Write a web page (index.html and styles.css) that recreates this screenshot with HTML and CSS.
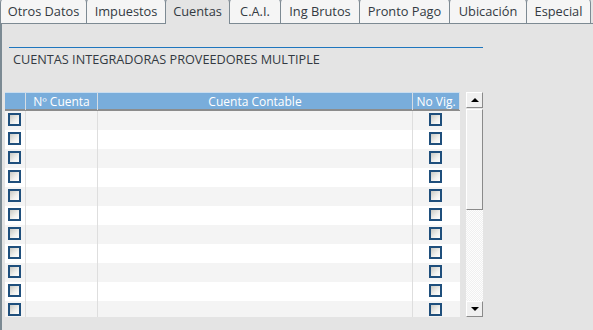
FILE: index.html
```html
<!DOCTYPE html>
<html>
<head>
<meta charset="utf-8">
<link rel="stylesheet" href="styles.css">
</head>
<body>
<div class="tabs">
  <div class="tab w87">Otros Datos</div>
  <div class="tab w80">Impuestos</div>
  <div class="tab w65 active">Cuentas</div>
  <div class="tab w52">C.A.I.</div>
  <div class="tab w80">Ing Brutos</div>
  <div class="tab w91">Pronto Pago</div>
  <div class="tab w78">Ubicación</div>
  <div class="tab w65">Especial</div>
</div>
<div class="panel">
  <div class="section-title">CUENTAS INTEGRADORAS PROVEEDORES MULTIPLE</div>
  <div class="grid-area">
    <div class="grid">
      <div class="row head">
        <div class="cell c-sel"></div>
        <div class="cell c-num">Nº Cuenta</div>
        <div class="cell c-acc">Cuenta Contable</div>
        <div class="cell c-nv">No Vig.</div>
      </div>
      <div class="body" id="body"></div>
    </div>
    <div class="scrollbar">
      <div class="sb-btn"><span class="arr up"></span></div>
      <div class="sb-thumb"></div>
      <div class="sb-track"></div>
      <div class="sb-btn"><span class="arr down"></span></div>
    </div>
  </div>
</div>
<script>
  var body = document.getElementById('body');
  for (var i = 0; i < 11; i++) {
    var r = document.createElement('div');
    r.className = 'row ' + (i % 2 === 0 ? 'odd' : 'even');
    r.innerHTML = '<div class="cell c-sel"><span class="chk"></span></div>' +
      '<div class="cell c-num"></div><div class="cell c-acc"></div>' +
      '<div class="cell c-nv"><span class="chk"></span></div>';
    body.appendChild(r);
  }
</script>
</body>
</html>
```
FILE: styles.css
```css
html, body {
  margin: 0;
  padding: 0;
  background: #e4e4e4;
  width: 593px;
  height: 330px;
  overflow: hidden;
  font-family: "Open Sans", "Liberation Sans", sans-serif;
  color: #333a42;
}
.tabs {
  display: flex;
  height: 23px;
  border-bottom: 1px solid #7d8a93;
  align-items: flex-end;
}
.tab {
  box-sizing: border-box;
  margin-top: -4px;
  margin-left: -1px;
  padding: 6px 0 0 0;
  text-align: center;
  border: 1px solid #7d8a93;
  border-bottom: none;
  border-radius: 7px 7px 0 0;
  background: #f5f5f5;
  font-size: 12.8px;
  line-height: 17px;
  white-space: nowrap;
  margin-bottom: -1px;
  height: 28px;
}
.w87 { width: 87px; }
.w80 { width: 80px; }
.w65 { width: 65px; }
.w52 { width: 52px; }
.w91 { width: 91px; }
.w78 { width: 78px; }
.tab:first-child { margin-left: 0; }
.tab.active {
  background: #e4e4e4;
  position: relative;
  z-index: 1;
}
.tab:not(.active) {
  height: 27px;
  margin-bottom: 0;
}
.panel {
  border-left: 2px solid #7b8a93;
  height: 306px;
  box-sizing: border-box;
  padding-top: 23px;
}
.section-title {
  margin-left: 7px;
  width: 474px;
  border-top: 1px solid #1e76be;
  padding: 3px 0 0 4px;
  font-size: 12.7px;
  line-height: 16px;
  height: 45px;
  box-sizing: border-box;
}
.grid-area {
  display: flex;
  margin-left: 3px;
  gap: 6px;
}
.grid {
  width: 455px;
  height: 225px;
  overflow: hidden;
}
.row {
  display: grid;
  grid-template-columns: 20px 72px 315px 48px;
  height: 19px;
}
.row.head {
  height: 16px;
  background: #79addb;
  border-top: 1px solid #c9ddef;
  border-bottom: 2px solid #8c8c8c;
  color: #fff;
  font-size: 12px;
  line-height: 17px;
}
.head .cell {
  text-align: center;
  border-left: 1px solid #d6dde4;
}
.head .cell:first-child { border-left: none; }
.head .c-nv { border-right: 1px solid #d6dde4; }
.row.odd { background: #f4f4f4; }
.row.even { background: #ffffff; }
.body .cell { border-left: 1px solid #dedede; position: relative; }
.body .cell:first-child { border-left: none; }
.chk {
  display: block;
  width: 13px;
  height: 13px;
  box-sizing: border-box;
  border: 2px solid #1f4f7c;
  background: linear-gradient(135deg, #c9c9c3 0%, #f1f1ee 60%, #ffffff 100%);
  margin-top: 2px;
}
.c-sel .chk { margin-left: 3px; }
.c-nv .chk { margin-left: 16px; }
.scrollbar {
  width: 17px;
  height: 225px;
  display: flex;
  flex-direction: column;
}
.sb-btn {
  height: 16px;
  box-sizing: border-box;
  background: #f0f0f0;
  border-top: 1px solid #ffffff;
  border-left: 1px solid #ffffff;
  border-right: 1px solid #8a8a8a;
  border-bottom: 1px solid #8a8a8a;
  display: flex;
  align-items: center;
  justify-content: center;
}
.arr {
  width: 0;
  height: 0;
  border-left: 4px solid transparent;
  border-right: 4px solid transparent;
}
.arr.up { border-bottom: 4px solid #000; }
.arr.down { border-top: 4px solid #000; }
.sb-thumb {
  height: 101px;
  box-sizing: border-box;
  background: #f0f0f0;
  border-top: 1px solid #ffffff;
  border-left: 1px solid #ffffff;
  border-right: 1px solid #8a8a8a;
  border-bottom: 1px solid #8a8a8a;
  margin-top: 1px;
}
.sb-track {
  flex: 1;
  background-color: #fbfbfb;
  background-image: repeating-conic-gradient(#f0f0f0 0% 25%, #fdfdfd 0% 50%);
  background-size: 2px 2px;
}
```
